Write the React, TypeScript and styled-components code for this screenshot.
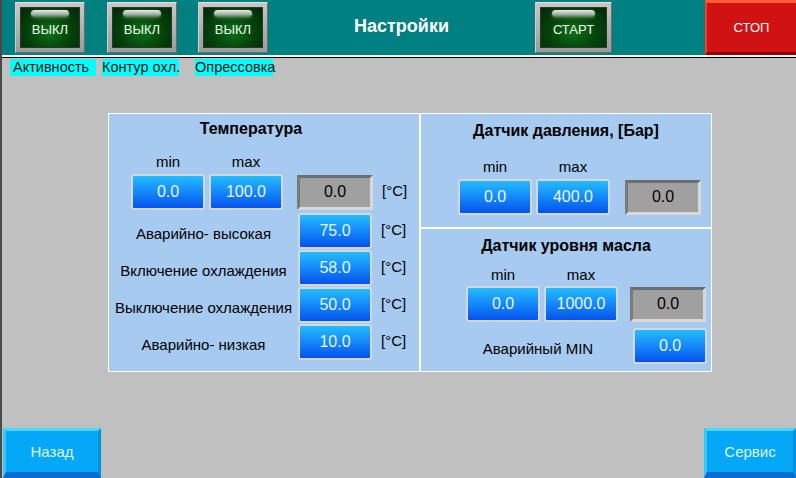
import React from "react";
import styled, { createGlobalStyle } from "styled-components";

const GlobalStyle = createGlobalStyle`
  html, body {
    margin: 0;
    padding: 0;
    background: #c0c0c0;
  }
  body {
    font-family: "Liberation Sans", Arial, sans-serif;
  }
`;

const Screen = styled.div`
  width: 796px;
  height: 478px;
  box-sizing: border-box;
  border-left: 2px solid #4a4a4a;
  display: flex;
  flex-direction: column;
  overflow: hidden;
  background: #c0c0c0;
`;

const Header = styled.header`
  height: 55px;
  flex-shrink: 0;
  background: #008080;
  border-bottom: 2px solid #ffffff;
  box-shadow: 0 1px 0 #000000;
  display: flex;
  align-items: center;
  padding-left: 13px;
`;

const Lamp = styled.div<{ $gap?: number; $width?: number }>`
  width: ${(p) => p.$width ?? 70}px;
  height: 51px;
  margin-left: ${(p) => p.$gap ?? 0}px;
  box-sizing: border-box;
  padding: 4px;
  background: linear-gradient(#c8c8c8, #9a9a9a);
  border: 1px solid #6a6a6a;
  border-top-color: #e0e0e0;
  border-left-color: #d0d0d0;
  flex-shrink: 0;
`;

const LampFace = styled.div`
  position: relative;
  height: 100%;
  background: radial-gradient(ellipse at 50% 62%, #0e7016 0%, #04440b 50%, #012805 100%);
  border: 1px solid #2a3a2a;
  box-sizing: border-box;
  display: flex;
  align-items: center;
  justify-content: center;
  color: #eefbee;
  font-size: 13px;
  padding-top: 4px;

  &::before {
    content: "";
    position: absolute;
    top: 2px;
    left: 17%;
    right: 17%;
    height: 7px;
    border-radius: 4px;
    background: linear-gradient(#ffffff, #b4c2b4 60%, #5a7a5a);
    box-shadow: 0 1px 3px rgba(200, 255, 200, 0.4);
    opacity: 0.9;
  }
`;

const Title = styled.div`
  flex: 1;
  text-align: center;
  color: #ffffff;
  font-weight: bold;
  font-size: 18px;
  padding-bottom: 2px;
`;

const StopButton = styled.button`
  margin-left: 93px;
  width: 91px;
  height: 55px;
  align-self: flex-start;
  flex-shrink: 0;
  background: #d01212;
  border: none;
  border-top: 3px solid #ff5a36;
  border-left: 2px solid #ff3a20;
  border-bottom: 3px solid #8e0606;
  color: #ffffff;
  font-family: inherit;
  font-size: 13px;
  padding: 0;
`;

const TagRow = styled.div`
  display: flex;
  align-items: center;
  margin-top: 2px;
  height: 17px;
`;

const Tag = styled.span<{ $left: number; $width: number; $pad?: number }>`
  margin-left: ${(p) => p.$left}px;
  width: ${(p) => p.$width}px;
  box-sizing: border-box;
  padding-left: ${(p) => p.$pad ?? 0}px;
  background: #00ffff;
  color: #101010;
  font-size: 14.5px;
  line-height: 17px;
  white-space: nowrap;
  flex-shrink: 0;
`;

const Panel = styled.div`
  margin: 37px 0 0 106px;
  width: 604px;
  height: 259px;
  box-sizing: border-box;
  border: 1px solid #ffffff;
  background: #a6caf0;
  display: grid;
  grid-template-columns: 310px 1fr;
  color: #000000;
`;

const Column = styled.div`
  display: flex;
  flex-direction: column;
`;

const RightColumn = styled(Column)`
  border-left: 2px solid #ffffff;
`;

const Section = styled.div<{ $divider?: boolean; $top?: number }>`
  display: flex;
  flex-direction: column;
  padding-top: ${(p) => p.$top ?? 7}px;
  ${(p) => (p.$divider ? "border-top: 2px solid #ffffff;" : "")}
  flex: ${(p) => (p.$divider ? 1 : "none")};
  height: ${(p) => (p.$divider ? "auto" : "113px")};
  box-sizing: border-box;
`;

const SectionTitle = styled.div<{ $shift?: number }>`
  text-align: center;
  font-weight: bold;
  font-size: 16px;
  height: 20px;
  line-height: 20px;
  padding-right: ${(p) => p.$shift ?? 0}px;
`;

const RangeLabels = styled.div<{ $left: number; $top: number }>`
  display: flex;
  gap: 4px;
  padding-left: ${(p) => p.$left}px;
  margin-top: ${(p) => p.$top}px;
  font-size: 15px;
  line-height: 18px;

  & > span {
    width: 74px;
    text-align: center;
  }
`;

const ValueRow = styled.div<{ $left: number; $top: number }>`
  display: flex;
  align-items: center;
  gap: 4px;
  padding-left: ${(p) => p.$left}px;
  margin-top: ${(p) => p.$top}px;
`;

const ValueButton = styled.div`
  width: 74px;
  height: 36px;
  box-sizing: border-box;
  border: 2px solid #d4d8dc;
  border-radius: 3px;
  background: linear-gradient(#24bcff 0%, #1488fa 50%, #0452ec 100%);
  color: #e8f6ff;
  font-size: 16px;
  display: flex;
  align-items: center;
  justify-content: center;
  flex-shrink: 0;
`;

const Display = styled.div<{ $left: number }>`
  margin-left: ${(p) => p.$left}px;
  width: 76px;
  height: 35px;
  box-sizing: border-box;
  background: #a0a0a0;
  border: 3px solid #d8d8d8;
  border-top-color: #6e6e6e;
  border-left-color: #7a7a7a;
  color: #000000;
  font-size: 16px;
  display: flex;
  align-items: center;
  justify-content: center;
  flex-shrink: 0;
`;

const Unit = styled.span<{ $left?: number }>`
  margin-left: ${(p) => p.$left ?? 9}px;
  font-size: 15px;
  margin-bottom: 4px;
`;

const SetpointGrid = styled.div`
  display: grid;
  grid-template-columns: 189px 74px auto;
  row-gap: 1px;
  margin-top: 3px;
  align-items: center;
`;

const SetpointLabel = styled.span<{ $pad?: number }>`
  text-align: center;
  font-size: 15px;
  white-space: nowrap;
  padding-top: 4px;
  padding-left: ${(p) => p.$pad ?? 0}px;
`;

const AlarmRow = styled.div`
  display: grid;
  grid-template-columns: 212px 74px;
  align-items: center;
  margin-top: 6px;
`;

const Footer = styled.footer`
  margin-top: auto;
  display: flex;
  justify-content: space-between;
  align-items: flex-end;
  padding-left: 1px;
`;

const NavButton = styled.button<{ $width: number }>`
  width: ${(p) => p.$width}px;
  height: 50px;
  box-sizing: border-box;
  background: #04a8f6;
  border: none;
  border-top: 3px solid #48d8ff;
  border-left: 3px solid #30c8ff;
  border-right: 3px solid #0490e0;
  border-bottom: 6px solid #0a6ed0;
  color: #dff6ff;
  font-family: inherit;
  font-size: 15px;
  padding: 0;
`;

const setpoints = [
  { label: "Аварийно- высокая", value: "75.0" },
  { label: "Включение охлаждения", value: "58.0" },
  { label: "Выключение охлаждения", value: "50.0" },
  { label: "Аварийно- низкая", value: "10.0" },
];

export default function App() {
  return (
    <>
      <GlobalStyle />
      <Screen>
        <Header>
          <Lamp>
            <LampFace>ВЫКЛ</LampFace>
          </Lamp>
          <Lamp $gap={22}>
            <LampFace>ВЫКЛ</LampFace>
          </Lamp>
          <Lamp $gap={21}>
            <LampFace>ВЫКЛ</LampFace>
          </Lamp>
          <Title>Настройки</Title>
          <Lamp $width={77}>
            <LampFace>СТАРТ</LampFace>
          </Lamp>
          <StopButton>СТОП</StopButton>
        </Header>

        <TagRow>
          <Tag $left={8} $width={86} $pad={3}>Активность</Tag>
          <Tag $left={6} $width={77}>Контур охл.</Tag>
          <Tag $left={16} $width={78}>Опрессовка</Tag>
        </TagRow>

        <Panel>
          <Column>
            <Section $top={5}>
              <SectionTitle $shift={26}>Температура</SectionTitle>
              <RangeLabels $left={22} $top={14}>
                <span>min</span>
                <span>max</span>
              </RangeLabels>
              <ValueRow $left={22} $top={3}>
                <ValueButton>0.0</ValueButton>
                <ValueButton>100.0</ValueButton>
                <Display $left={10}>0.0</Display>
                <Unit $left={5}>[°C]</Unit>
              </ValueRow>
              <SetpointGrid>
                {setpoints.map((s) => (
                  <React.Fragment key={s.label}>
                    <SetpointLabel>{s.label}</SetpointLabel>
                    <ValueButton>{s.value}</ValueButton>
                    <Unit>[°C]</Unit>
                  </React.Fragment>
                ))}
              </SetpointGrid>
            </Section>
          </Column>

          <RightColumn>
            <Section>
              <SectionTitle>Датчик давления, [Бар]</SectionTitle>
              <RangeLabels $left={37} $top={17}>
                <span>min</span>
                <span>max</span>
              </RangeLabels>
              <ValueRow $left={37} $top={3}>
                <ValueButton>0.0</ValueButton>
                <ValueButton>400.0</ValueButton>
                <Display $left={11}>0.0</Display>
              </ValueRow>
            </Section>
            <Section $divider>
              <SectionTitle>Датчик уровня масла</SectionTitle>
              <RangeLabels $left={45} $top={10}>
                <span>min</span>
                <span>max</span>
              </RangeLabels>
              <ValueRow $left={45} $top={2}>
                <ValueButton>0.0</ValueButton>
                <ValueButton>1000.0</ValueButton>
                <Display $left={8}>0.0</Display>
              </ValueRow>
              <AlarmRow>
                <SetpointLabel $pad={22}>Аварийный MIN</SetpointLabel>
                <ValueButton>0.0</ValueButton>
              </AlarmRow>
            </Section>
          </RightColumn>
        </Panel>

        <Footer>
          <NavButton $width={98}>Назад</NavButton>
          <NavButton $width={92}>Сервис</NavButton>
        </Footer>
      </Screen>
    </>
  );
}
